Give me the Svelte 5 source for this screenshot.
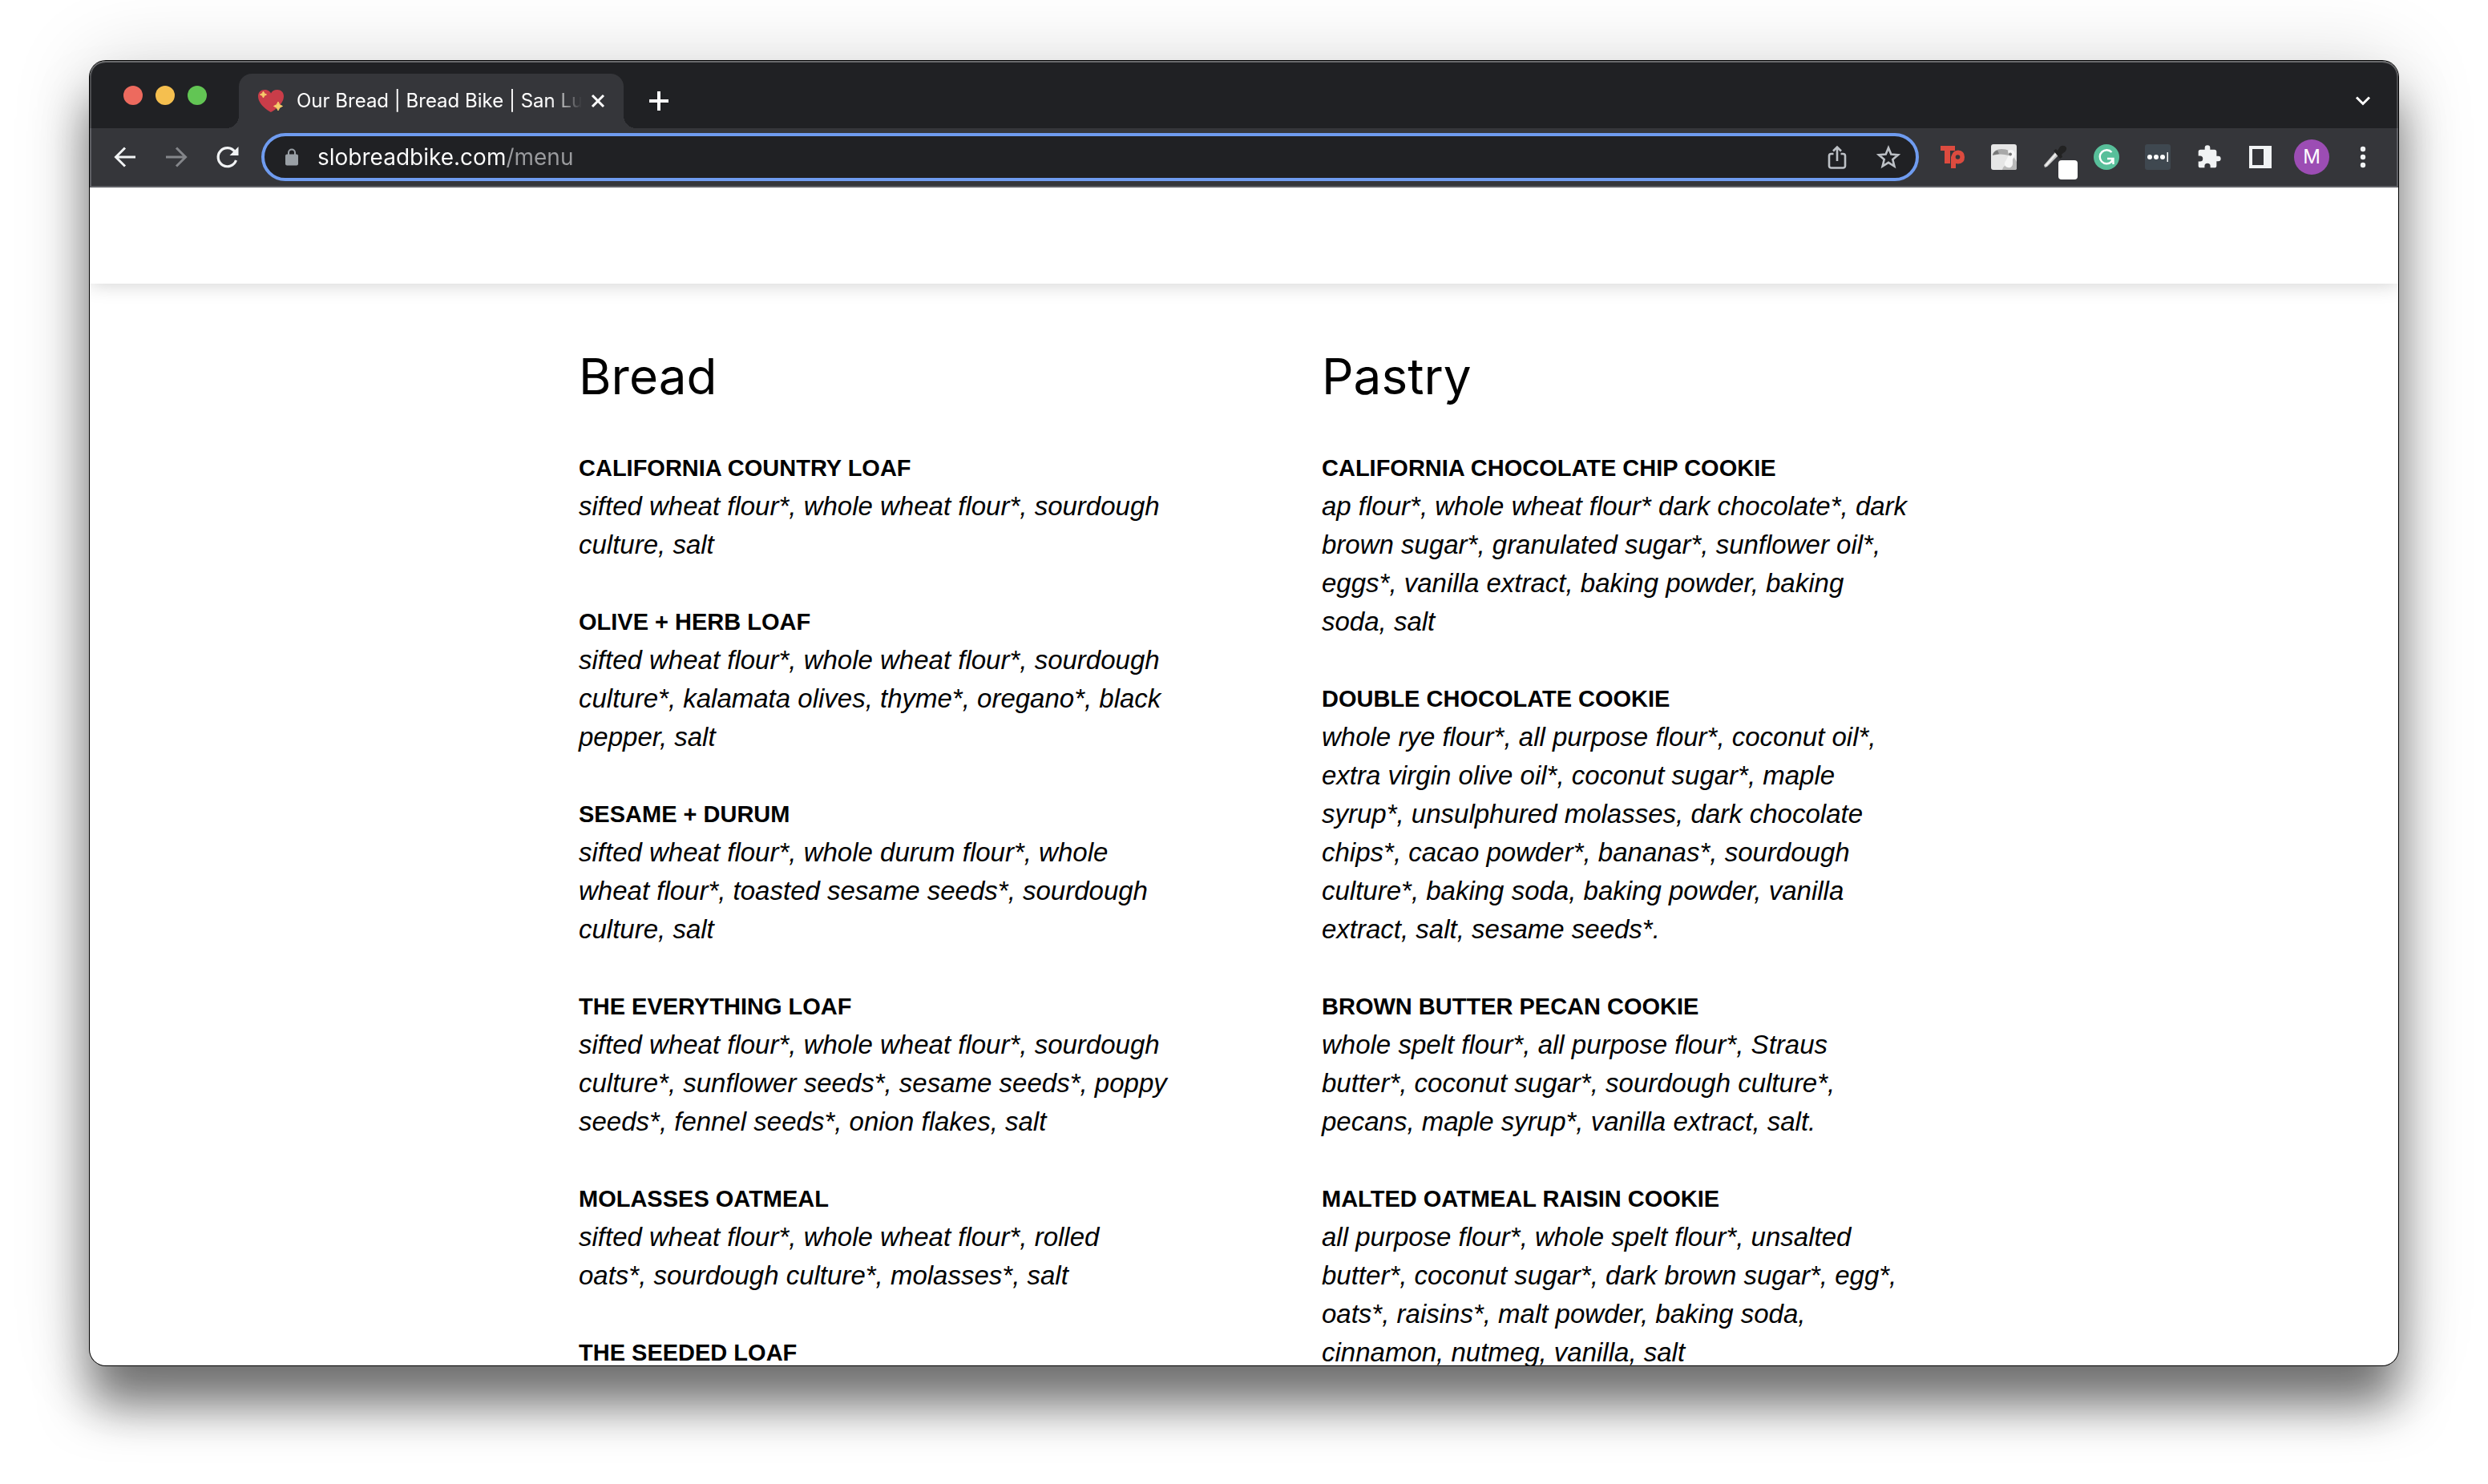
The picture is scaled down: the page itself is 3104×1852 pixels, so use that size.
<script>
  const bread = [
    { name: 'California Country Loaf', lines: ['sifted wheat flour*, whole wheat flour*, sourdough', 'culture, salt'] },
    { name: 'Olive + Herb Loaf', lines: ['sifted wheat flour*, whole wheat flour*, sourdough', 'culture*, kalamata olives, thyme*, oregano*, black', 'pepper, salt'] },
    { name: 'Sesame + Durum', lines: ['sifted wheat flour*, whole durum flour*, whole', 'wheat flour*, toasted sesame seeds*, sourdough', 'culture, salt'] },
    { name: 'The Everything Loaf', lines: ['sifted wheat flour*, whole wheat flour*, sourdough', 'culture*, sunflower seeds*, sesame seeds*, poppy', 'seeds*, fennel seeds*, onion flakes, salt'] },
    { name: 'Molasses Oatmeal', lines: ['sifted wheat flour*, whole wheat flour*, rolled', 'oats*, sourdough culture*, molasses*, salt'] },
    { name: 'The Seeded Loaf', lines: [] },
  ];
  const pastry = [
    { name: 'California Chocolate Chip Cookie', lines: ['ap flour*, whole wheat flour* dark chocolate*, dark', 'brown sugar*, granulated sugar*, sunflower oil*,', 'eggs*, vanilla extract, baking powder, baking', 'soda, salt'] },
    { name: 'Double Chocolate Cookie', lines: ['whole rye flour*, all purpose flour*, coconut oil*,', 'extra virgin olive oil*, coconut sugar*, maple', 'syrup*, unsulphured molasses, dark chocolate', 'chips*, cacao powder*, bananas*, sourdough', 'culture*, baking soda, baking powder, vanilla', 'extract, salt, sesame seeds*.'] },
    { name: 'Brown Butter Pecan Cookie', lines: ['whole spelt flour*, all purpose flour*, Straus', 'butter*, coconut sugar*, sourdough culture*,', 'pecans, maple syrup*, vanilla extract, salt.'] },
    { name: 'Malted Oatmeal Raisin Cookie', lines: ['all purpose flour*, whole spelt flour*, unsalted', 'butter*, coconut sugar*, dark brown sugar*, egg*,', 'oats*, raisins*, malt powder, baking soda,', 'cinnamon, nutmeg, vanilla, salt'] },
  ];
  const menu = [
    { title: 'Bread', items: bread },
    { title: 'Pastry', items: pastry },
  ];
  let url = $state('slobreadbike.com/menu');
</script>

<div class="desktop">
  <div class="window">
    <header class="tabs">
      <div class="lights">
        <button class="light red" aria-label="Close window"></button>
        <button class="light yellow" aria-label="Minimize window"></button>
        <button class="light green" aria-label="Zoom window"></button>
      </div>
      <div class="tab">
        <svg class="favicon" width="32" height="32" viewBox="0 0 32 32" aria-hidden="true">
          <path d="M16 30C12 28 0 20 0 10C0 5 3.500 2 8 2C12 2 15 4 16 6.500C17 4 20 2 24 2C28.500 2 32 5 32 10C32 20 20 28 16 30Z" fill="#c93d49" />
          <path d="M6.500 4Q7.200 7.300 10.500 8Q7.200 8.700 6.500 12Q5.800 8.700 2.500 8Q5.800 7.300 6.500 4Z" fill="#f7cd6b" stroke="#f7cd6b" />
          <path d="M25 17Q26 21.500 30.500 22.500Q26 23.500 25 28Q24 23.500 19.500 22.500Q24 21.500 25 17Z" fill="#f7cd6b" stroke="#f7cd6b" />
        </svg>
        <span class="tab-title">Our Bread | Bread Bike | San Lu</span>
        <button class="close" aria-label="Close tab">
          <svg width="16" height="16" viewBox="0 0 16 16"><path d="M1 1L15 15M15 1L1 15" stroke="#fff" stroke-width="3" /></svg>
        </button>
      </div>
      <button class="tool newtab" aria-label="New tab">
        <svg width="24" height="24" viewBox="0 0 24 24"><path d="M12 0V24M0 12H24" stroke="#fff" stroke-width="4" /></svg>
      </button>
      <button class="tool search" aria-label="Search tabs">
        <svg width="20" height="14" viewBox="0 0 20 14"><path d="M2 2.500L10 10.500L18 2.500" fill="none" stroke="#fff" stroke-width="3" /></svg>
      </button>
    </header>

    <nav class="toolbar">
      <button class="tool" aria-label="Back">
        <svg width="28" height="28" viewBox="0 0 28 28" fill="none" stroke="#f1f3f4" stroke-width="3"><path d="M27 14H3M14 2.500L2.500 14L14 25.500" /></svg>
      </button>
      <button class="tool" aria-label="Forward">
        <svg width="28" height="28" viewBox="0 0 28 28" fill="none" stroke="#84868a" stroke-width="3"><path d="M1 14H25M14 2.500L25.500 14L14 25.500" /></svg>
      </button>
      <button class="tool" aria-label="Reload">
        <svg width="28" height="28" viewBox="0 0 28 28"><path d="M23 7.500A11.500 11.500 0 1 0 24.500 18" fill="none" stroke="#f1f3f4" stroke-width="3.200" /><path d="M27.500 1V12H16.500Z" fill="#f1f3f4" /></svg>
      </button>
      <form class="omnibox">
        <svg class="lock" width="16" height="22" viewBox="0 0 16 22" aria-hidden="true"><rect y="7.500" width="16" height="14" rx="2" fill="#9aa0a6" /><path d="M4 9V5.500a4 4 0 0 1 8 0V9" fill="none" stroke="#9aa0a6" stroke-width="2" /></svg>
        <input class="url" aria-label="Address" bind:value={url} spellcheck="false" />
        <button type="button" class="tool" aria-label="Share">
          <svg width="24" height="30" viewBox="0 0 24 30" fill="none" stroke="#bdc1c6" stroke-width="2.600"><path d="M7.500 11H4.500a2.500 2.500 0 0 0-2.500 2.500V26a2.500 2.500 0 0 0 2.500 2.500h15A2.500 2.500 0 0 0 22 26V13.500a2.500 2.500 0 0 0-2.500-2.500h-3M12 20V3M7 7.500L12 2.500L17 7.500" /></svg>
        </button>
        <button type="button" class="tool" aria-label="Bookmark this page">
          <svg width="30" height="30" viewBox="0 0 30 30"><path d="M15 3.500L18.300 11.600L27 12.300L20.300 18L22.400 26.500L15 21.900L7.600 26.500L9.700 18L3 12.300L11.700 11.600Z" fill="none" stroke="#bdc1c6" stroke-width="2.600" /></svg>
        </button>
      </form>
      <div class="extensions">
        <button class="tool" aria-label="Teachers Pay Teachers">
          <svg width="32" height="32" viewBox="0 0 32 32"><path d="M1 2H19V8H13V24H6V8H1Z" fill="#dc4b3f" /><path d="M15 13.500Q17 7.500 23 7.500Q31 8 31 16T23 24.500L20 24V30H14V16Z" fill="#dc4b3f" /><circle cx="22.500" cy="16" r="2.800" fill="#35363a" /></svg>
        </button>
        <button class="tool" aria-label="Toucan">
          <svg width="32" height="32" viewBox="0 0 32 32"><rect width="32" height="32" rx="3" fill="#e6e6e6" /><path d="M27 14L32 22V30Q32 32 30 32H14Q15 28 18 26Z" fill="#b9b9b9" /><path d="M2 13Q4 6 13 6Q19 6 22 8V14Q12 11 2 14Z" fill="#a8a8a8" /><path d="M2 13.500Q3 9 8 7.500L10 12Q6 12.500 2 13.500Z" fill="#777" /><path d="M21 8Q28 5 30 12Q29 17 27 19V25Q26 30 21 29Q16 28 17 23L22 14Z" fill="#f6f6f6" /><circle cx="24" cy="12.500" r="2" fill="#777" /></svg>
        </button>
        <button class="tool" aria-label="Color picker">
          <svg width="28" height="28" viewBox="0 0 28 28"><path d="M0 24L14 8L18 12L4 26L1 27Z" fill="#c4c4c4" /><path d="M2 25L15 10" stroke="#eee" stroke-width="2" /><path d="M12 6L15 4L17 6L20 1Q25-2 28 2Q29 6 24 9L22 11L23 14L20 16Z" fill="#222" /><rect x="18" y="18" width="24" height="24" rx="4" fill="#fff" /></svg>
        </button>
        <button class="tool" aria-label="Grammarly">
          <svg width="32" height="32" viewBox="0 0 32 32"><circle cx="16" cy="16" r="16" fill="#58bf9a" /><path d="M22.500 10A8.500 8.500 0 1 0 22 22L24 18M17 18H24.500V25" fill="none" stroke="#fff" stroke-width="2.400" /></svg>
        </button>
        <button class="tool" aria-label="Password manager">
          <svg width="32" height="32" viewBox="0 0 32 32"><rect width="32" height="32" rx="3" fill="#3f4850" /><g fill="#fff"><circle cx="6" cy="16" r="3" /><circle cx="14" cy="16" r="3" /><circle cx="22" cy="16" r="3" /><path d="M27.500 10h1.500v12h-1.500z" /></g></svg>
        </button>
        <button class="tool" aria-label="Extensions">
          <svg width="32" height="32" viewBox="0 0 24 24"><path d="M20.500 11H19V7a2 2 0 0 0-2-2h-4V3.500a2.500 2.500 0 0 0-5 0V5H4a2 2 0 0 0-2 2v3.800h1.500a2.700 2.700 0 0 1 0 5.400H2V20a2 2 0 0 0 2 2h3.800v-1.500a2.700 2.700 0 0 1 5.400 0V22H17a2 2 0 0 0 2-2v-4h1.500a2.500 2.500 0 0 0 0-5Z" fill="#f1f3f4" /></svg>
        </button>
        <button class="tool" aria-label="Side panel">
          <svg width="28" height="28" viewBox="0 0 28 28"><path d="M0 0H28V28H0ZM4 4V24H18V4Z" fill="#f1f3f4" fill-rule="evenodd" /></svg>
        </button>
        <button class="tool" aria-label="Profile"><span class="avatar">M</span></button>
        <button class="tool" aria-label="Chrome menu">
          <svg width="8" height="28" viewBox="0 0 8 28" fill="#f1f3f4"><circle cx="4" cy="4" r="3.200" /><circle cx="4" cy="14" r="3.200" /><circle cx="4" cy="24" r="3.200" /></svg>
        </button>
      </div>
    </nav>

    <div class="page">
      <div class="site-header"></div>
      <main class="menu">
        {#each menu as section}
          <section>
            <h2>{section.title}</h2>
            {#each section.items as item}
              <article>
                <h3>{item.name}</h3>
                <p>{#each item.lines as line, i}{#if i > 0}<br />{/if}{line}{/each}</p>
              </article>
            {/each}
          </section>
        {/each}
      </main>
    </div>
  </div>
</div>

<style>
  :global(body) {
    background: #fff;
  }
  .desktop {
    box-sizing: border-box;
    height: 100vh;
    padding: 76px 112px 148px;
    overflow: hidden;
    display: flex;
    font-family: Inter, 'Liberation Sans', sans-serif;
  }
  .window {
    flex: 1;
    min-width: 0;
    display: flex;
    flex-direction: column;
    overflow: hidden;
    border-radius: 20px;
    background: #fff;
    box-shadow:
      0 0 0 1px #000,
      0 50px 60px rgba(0, 0, 0, 0.53),
      0 0 100px rgba(0, 0, 0, 0.15);
  }
  button {
    padding: 0;
    border: 0;
    background: none;
    font: inherit;
    color: inherit;
  }
  svg {
    display: block;
    overflow: visible;
  }
  .tabs {
    display: flex;
    align-items: flex-end;
    height: 84px;
    padding: 0 12px 0 42px;
    box-sizing: border-box;
    border-radius: 20px 20px 0 0;
    background: #202124;
    box-shadow:
      inset 0 2px #6a6b6d,
      inset 2px 0 #4c4d50,
      inset -2px 0 #4c4d50;
  }
  .lights {
    display: flex;
    gap: 16px;
    width: 144px;
    height: 82px;
    align-items: center;
  }
  .light {
    width: 24px;
    height: 24px;
    border-radius: 50%;
  }
  .red { background: #ed6a5e; }
  .yellow { background: #f5bf4f; }
  .green { background: #62c554; }
  .tab {
    position: relative;
    box-sizing: border-box;
    display: flex;
    align-items: center;
    width: 480px;
    height: 68px;
    padding: 0 24px;
    border-radius: 16px 16px 0 0;
    background: #35363a;
    color: #fff;
  }
  .tab::before,
  .tab::after {
    content: '';
    position: absolute;
    bottom: 0;
    width: 16px;
    height: 16px;
  }
  .tab::before {
    right: 100%;
    background: radial-gradient(circle at 0 0, transparent 16px, #35363a 16px);
  }
  .tab::after {
    left: 100%;
    background: radial-gradient(circle at 100% 0, transparent 16px, #35363a 16px);
  }
  .tab-title {
    flex: 1;
    min-width: 0;
    margin-left: 16px;
    white-space: nowrap;
    font-size: 24px;
    line-height: 32px;
    mask-image: linear-gradient(to right, #000 calc(100% - 40px), transparent);
  }
  .close {
    margin-left: 12px;
  }
  .tool {
    flex: none;
    display: flex;
    align-items: center;
    justify-content: center;
    width: 64px;
    height: 64px;
  }
  .newtab {
    margin-left: 12px;
    height: 68px;
  }
  .search {
    margin-left: auto;
    height: 68px;
  }
  .toolbar {
    display: flex;
    align-items: center;
    height: 72px;
    padding: 0 12px;
    background: #35363a;
    border-bottom: 2px solid #5f6065;
    box-shadow:
      inset 2px 0 #5f6065,
      inset -2px 0 #5f6065;
  }
  .omnibox {
    flex: 1;
    box-sizing: border-box;
    display: flex;
    align-items: center;
    height: 60px;
    margin: 0 10px;
    padding: 0 2px 0 26px;
    border: 4px solid #6f9cf0;
    border-radius: 30px;
    background: #202124;
  }
  .url {
    flex: 1;
    min-width: 0;
    height: 52px;
    margin-left: 24px;
    padding: 0;
    border: 0;
    outline: 0;
    font: 28px Inter, 'Liberation Sans', sans-serif;
    color: transparent;
    background: linear-gradient(to right, #fff 235px, #9a9b9e 235px) text;
  }
  .extensions {
    display: flex;
  }
  .avatar {
    width: 44px;
    border-radius: 50%;
    background: #9c4db4;
    color: #fff;
    font-size: 24px;
    line-height: 44px;
  }
  .page {
    flex: 1;
    min-height: 0;
    overflow: hidden;
    color: #000;
  }
  .site-header {
    height: 120px;
    box-shadow: 0 0 24px rgba(0, 0, 0, 0.2);
  }
  .menu {
    display: grid;
    grid-template-columns: repeat(2, minmax(0, 1fr));
    gap: 194px;
    max-width: 1660px;
    margin: 0 auto;
    padding-top: 80px;
  }
  h2 {
    margin: 0 0 54px;
    font-size: 62px;
    line-height: 72px;
    font-weight: 400;
  }
  article {
    margin-bottom: 48px;
  }
  h3 {
    margin: 0;
    font: 700 29px/48px 'Liberation Sans', Arial, sans-serif;
    text-transform: uppercase;
    white-space: nowrap;
  }
  p {
    margin: 0;
    font: italic 33px/48px 'Liberation Sans', Arial, sans-serif;
    white-space: nowrap;
  }
</style>
